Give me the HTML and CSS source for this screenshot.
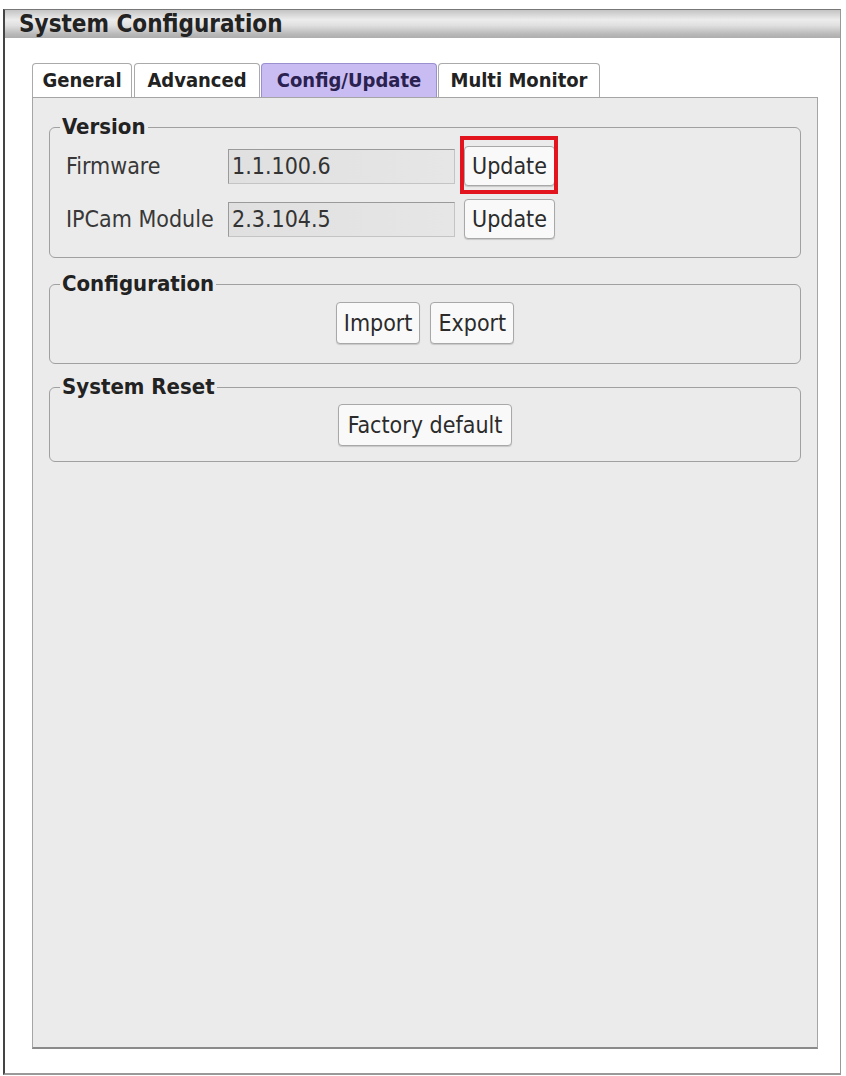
FILE: index.html
```html
<!DOCTYPE html>
<html lang="en">
<head>
<meta charset="UTF-8" />
<title>System Configuration</title>
<link rel="stylesheet" href="styles.css">
</head>
<body>
  <div class="window">
    <div class="titlebar">System Configuration</div>

    <div class="content">
      <div class="tabs">
        <div class="tab">General</div>
        <div class="tab">Advanced</div>
        <div class="tab active">Config/Update</div>
        <div class="tab">Multi Monitor</div>
      </div>

      <div class="panel">
        <fieldset class="group">
          <legend>Version</legend>
          <div class="row">
            <label for="fw">Firmware</label>
            <input class="field" id="fw" value="1.1.100.6" readonly />
            <button class="btn marked">Update</button>
          </div>
          <div class="row">
            <label for="ipcam">IPCam Module</label>
            <input class="field" id="ipcam" value="2.3.104.5" readonly />
            <button class="btn">Update</button>
          </div>
        </fieldset>

        <fieldset class="group config">
          <legend>Configuration</legend>
          <div class="actions">
            <button class="btn tall">Import</button>
            <button class="btn tall">Export</button>
          </div>
        </fieldset>

        <fieldset class="group reset">
          <legend>System Reset</legend>
          <div class="actions">
            <button class="btn tall wide">Factory default</button>
          </div>
        </fieldset>
      </div>
    </div>
  </div>
</body>
</html>
```

FILE: styles.css
```css
body {
  margin: 0;
  background: #fff;
  font-family: "DejaVu Sans Condensed", "DejaVu Sans", sans-serif;
  font-stretch: condensed;
  color: #2b2b2b;
}
.window {
  margin: 9px 5px 0 3px;
  height: 1063px;
  border: 1px solid #777;
  border-left: 2px solid #444;
  border-bottom: 2px solid #999;
  border-right: 1px solid #999;
  display: flex;
  flex-direction: column;
}
.titlebar {
  height: 28px;
  line-height: 28px;
  padding-left: 14px;
  font-size: 24px;
  font-weight: bold;
  color: #222;
  background: linear-gradient(#c4c4c4, #ececec 35%, #e0e0e0 55%, #bababa 85%, #adadad);
}
.content {
  flex: 1;
  display: flex;
  flex-direction: column;
  padding: 25px 22px 24px 27px;
}
.tabs {
  display: flex;
  gap: 1px;
}
.tab {
  height: 33px;
  line-height: 33px;
  text-align: center;
  font-size: 20px;
  font-weight: bold;
  color: #222;
  background: #fff;
  border: 1px solid #aaa;
  border-bottom: none;
  border-radius: 4px 4px 0 0;
}
.tab:nth-child(1) { width: 98px; }
.tab:nth-child(2) { width: 124px; margin-left: 1px; }
.tab:nth-child(3) { width: 174px; }
.tab:nth-child(4) { width: 160px; }
.tab.active {
  background: #c9bcf3;
  color: #2a2150;
  border-color: #9c8fd0;
}
.panel {
  flex: 1;
  background: #ebebeb;
  border: 1px solid #a5a5a5;
  border-bottom: 2px solid #8a8a8a;
  padding: 16px 16px 0;
}

/* group boxes */
.group {
  margin: 0 0 13px;
  padding: 6px 16px 18px;
  border: 1px solid #a0a0a0;
  border-radius: 6px;
}
.group legend {
  font-size: 22px;
  line-height: 26px;
  font-weight: bold;
  color: #222;
  padding: 0 2px;
  margin-left: -6px;
}
.group.config {
  padding: 5px 16px 19px;
  margin-bottom: 10px;
}
.group.reset {
  padding: 4px 16px 15px;
}
.row {
  display: flex;
  align-items: center;
  height: 40px;
}
.row + .row {
  margin-top: 13px;
}
.row label {
  width: 162px;
  font-size: 23px;
  color: #383838;
}
.field {
  width: 227px;
  height: 35px;
  box-sizing: border-box;
  padding: 0 3px;
  font-family: inherit;
  font-stretch: condensed;
  font-size: 23px;
  color: #333;
  background: linear-gradient(90deg, #e0e0e0, #e6e6e6);
  border: 1px solid #9a9a9a;
  border-right-color: #c4c4c4;
  border-bottom-color: #c4c4c4;
  outline: none;
}
.row .btn {
  margin-left: 9px;
}
.btn {
  position: relative;
  height: 40px;
  padding: 0 7px;
  font-family: inherit;
  font-stretch: condensed;
  font-size: 23px;
  color: #2b2b2b;
  background: #f9f9f9;
  border: 1px solid #a8a8a8;
  border-radius: 4px;
  box-shadow: 0 1px 1px rgba(0,0,0,0.15);
}
.btn.tall {
  height: 42px;
}
.btn.wide {
  padding: 0 9px;
}
/* red box drawn round the firmware update button */
.btn.marked::after {
  content: "";
  position: absolute;
  left: -5px;
  right: -4px;
  top: -11px;
  bottom: -9px;
  border: 4px solid #e2141d;
}
.actions {
  display: flex;
  justify-content: center;
  gap: 10px;
}
```
